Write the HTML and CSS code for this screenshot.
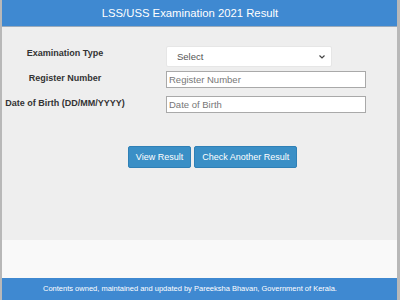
FILE: index.html
```html
<!DOCTYPE html>
<html lang="en">
<head>
  <meta charset="UTF-8">
  <title>LSS/USS Examination 2021 Result</title>
  <link rel="stylesheet" href="styles.css">
</head>
<body>
  <div class="page">
    <div class="header">LSS/USS Examination 2021 Result</div>
    <div class="content">
      <div class="form">
        <div class="label">Examination Type</div>
        <div class="field">
          <select class="select">
            <option>Select</option>
          </select>
        </div>
        <div class="label">Register Number</div>
        <div class="field"><input type="text" class="input" placeholder="Register Number"></div>
        <div class="label">Date of Birth (DD/MM/YYYY)</div>
        <div class="field"><input type="text" class="input" placeholder="Date of Birth"></div>
      </div>
      <div class="actions">
        <button class="btn">View Result</button>
        <button class="btn">Check Another Result</button>
      </div>
    </div>
    <div class="spacer"></div>
    <div class="footer">Contents owned, maintained and updated by Pareeksha Bhavan, Government of Kerala.</div>
  </div>
</body>
</html>
```

FILE: styles.css
```css
body {
  margin: 0;
  font-family: "Liberation Sans", Arial, sans-serif;
  background-color: #fff;
}
.page {
  width: 400px;
  height: 300px;
  display: flex;
  flex-direction: column;
  box-sizing: border-box;
  border-left: 2px solid #b8b8b8;
  border-right: 3px solid #b8b8b8;
}
.header {
  background-color: #3f89d1;
  color: #fff;
  text-align: center;
  font-size: 11.3px;
  height: 26px;
  line-height: 26px;
  padding-right: 19px;
  border-bottom: 1px solid #9ab;
}
.content {
  background-color: #eeeeee;
  height: 213px;
  padding-top: 19px;
  box-sizing: border-box;
}
.form {
  display: grid;
  grid-template-columns: 126px 1fr;
  column-gap: 38px;
  align-items: start;
}
.label {
  text-align: center;
  font-size: 9px;
  font-weight: bold;
  color: #333;
  padding-top: 2px;
}
.select {
  appearance: none;
  -webkit-appearance: none;
  width: 166px;
  height: 21px;
  border: 1px solid #e6e6e6;
  border-radius: 2px;
  background-color: #fff;
  background-image: url("data:image/svg+xml,%3Csvg xmlns='http://www.w3.org/2000/svg' width='6' height='4' viewBox='0 0 6 4'%3E%3Cpath d='M0.5 0.5 L3 3 L5.5 0.5' fill='none' stroke='%23444' stroke-width='1.2'/%3E%3C/svg%3E");
  background-repeat: no-repeat;
  background-position: right 6px center;
  font-family: inherit;
  font-size: 9.5px;
  color: #555;
  padding-left: 10px;
  margin: 0 0 4px;
}
.input {
  width: 200px;
  height: 17px;
  box-sizing: border-box;
  border: 1px solid #a9a9a9;
  background-color: #fff;
  font-family: inherit;
  font-size: 9.5px;
  padding: 0 2px;
  margin: 0 0 8px;
  display: block;
}
.input::placeholder {
  color: #777;
}
.actions {
  display: flex;
  justify-content: center;
  gap: 3px;
  margin-top: 25px;
  padding-left: 26px;
}
.btn {
  background-color: #3a8fc6;
  color: #fff;
  border: 1px solid #2f80b6;
  border-radius: 2px;
  font-family: inherit;
  font-size: 9px;
  height: 22px;
  padding: 0 7px;
  margin: 0;
}
.spacer {
  flex: 1;
  background-color: #f9f9f9;
}
.footer {
  background-color: #3f89d1;
  color: #fff;
  font-size: 7.5px;
  height: 22px;
  line-height: 22px;
  text-align: center;
  padding-right: 19px;
}
```
